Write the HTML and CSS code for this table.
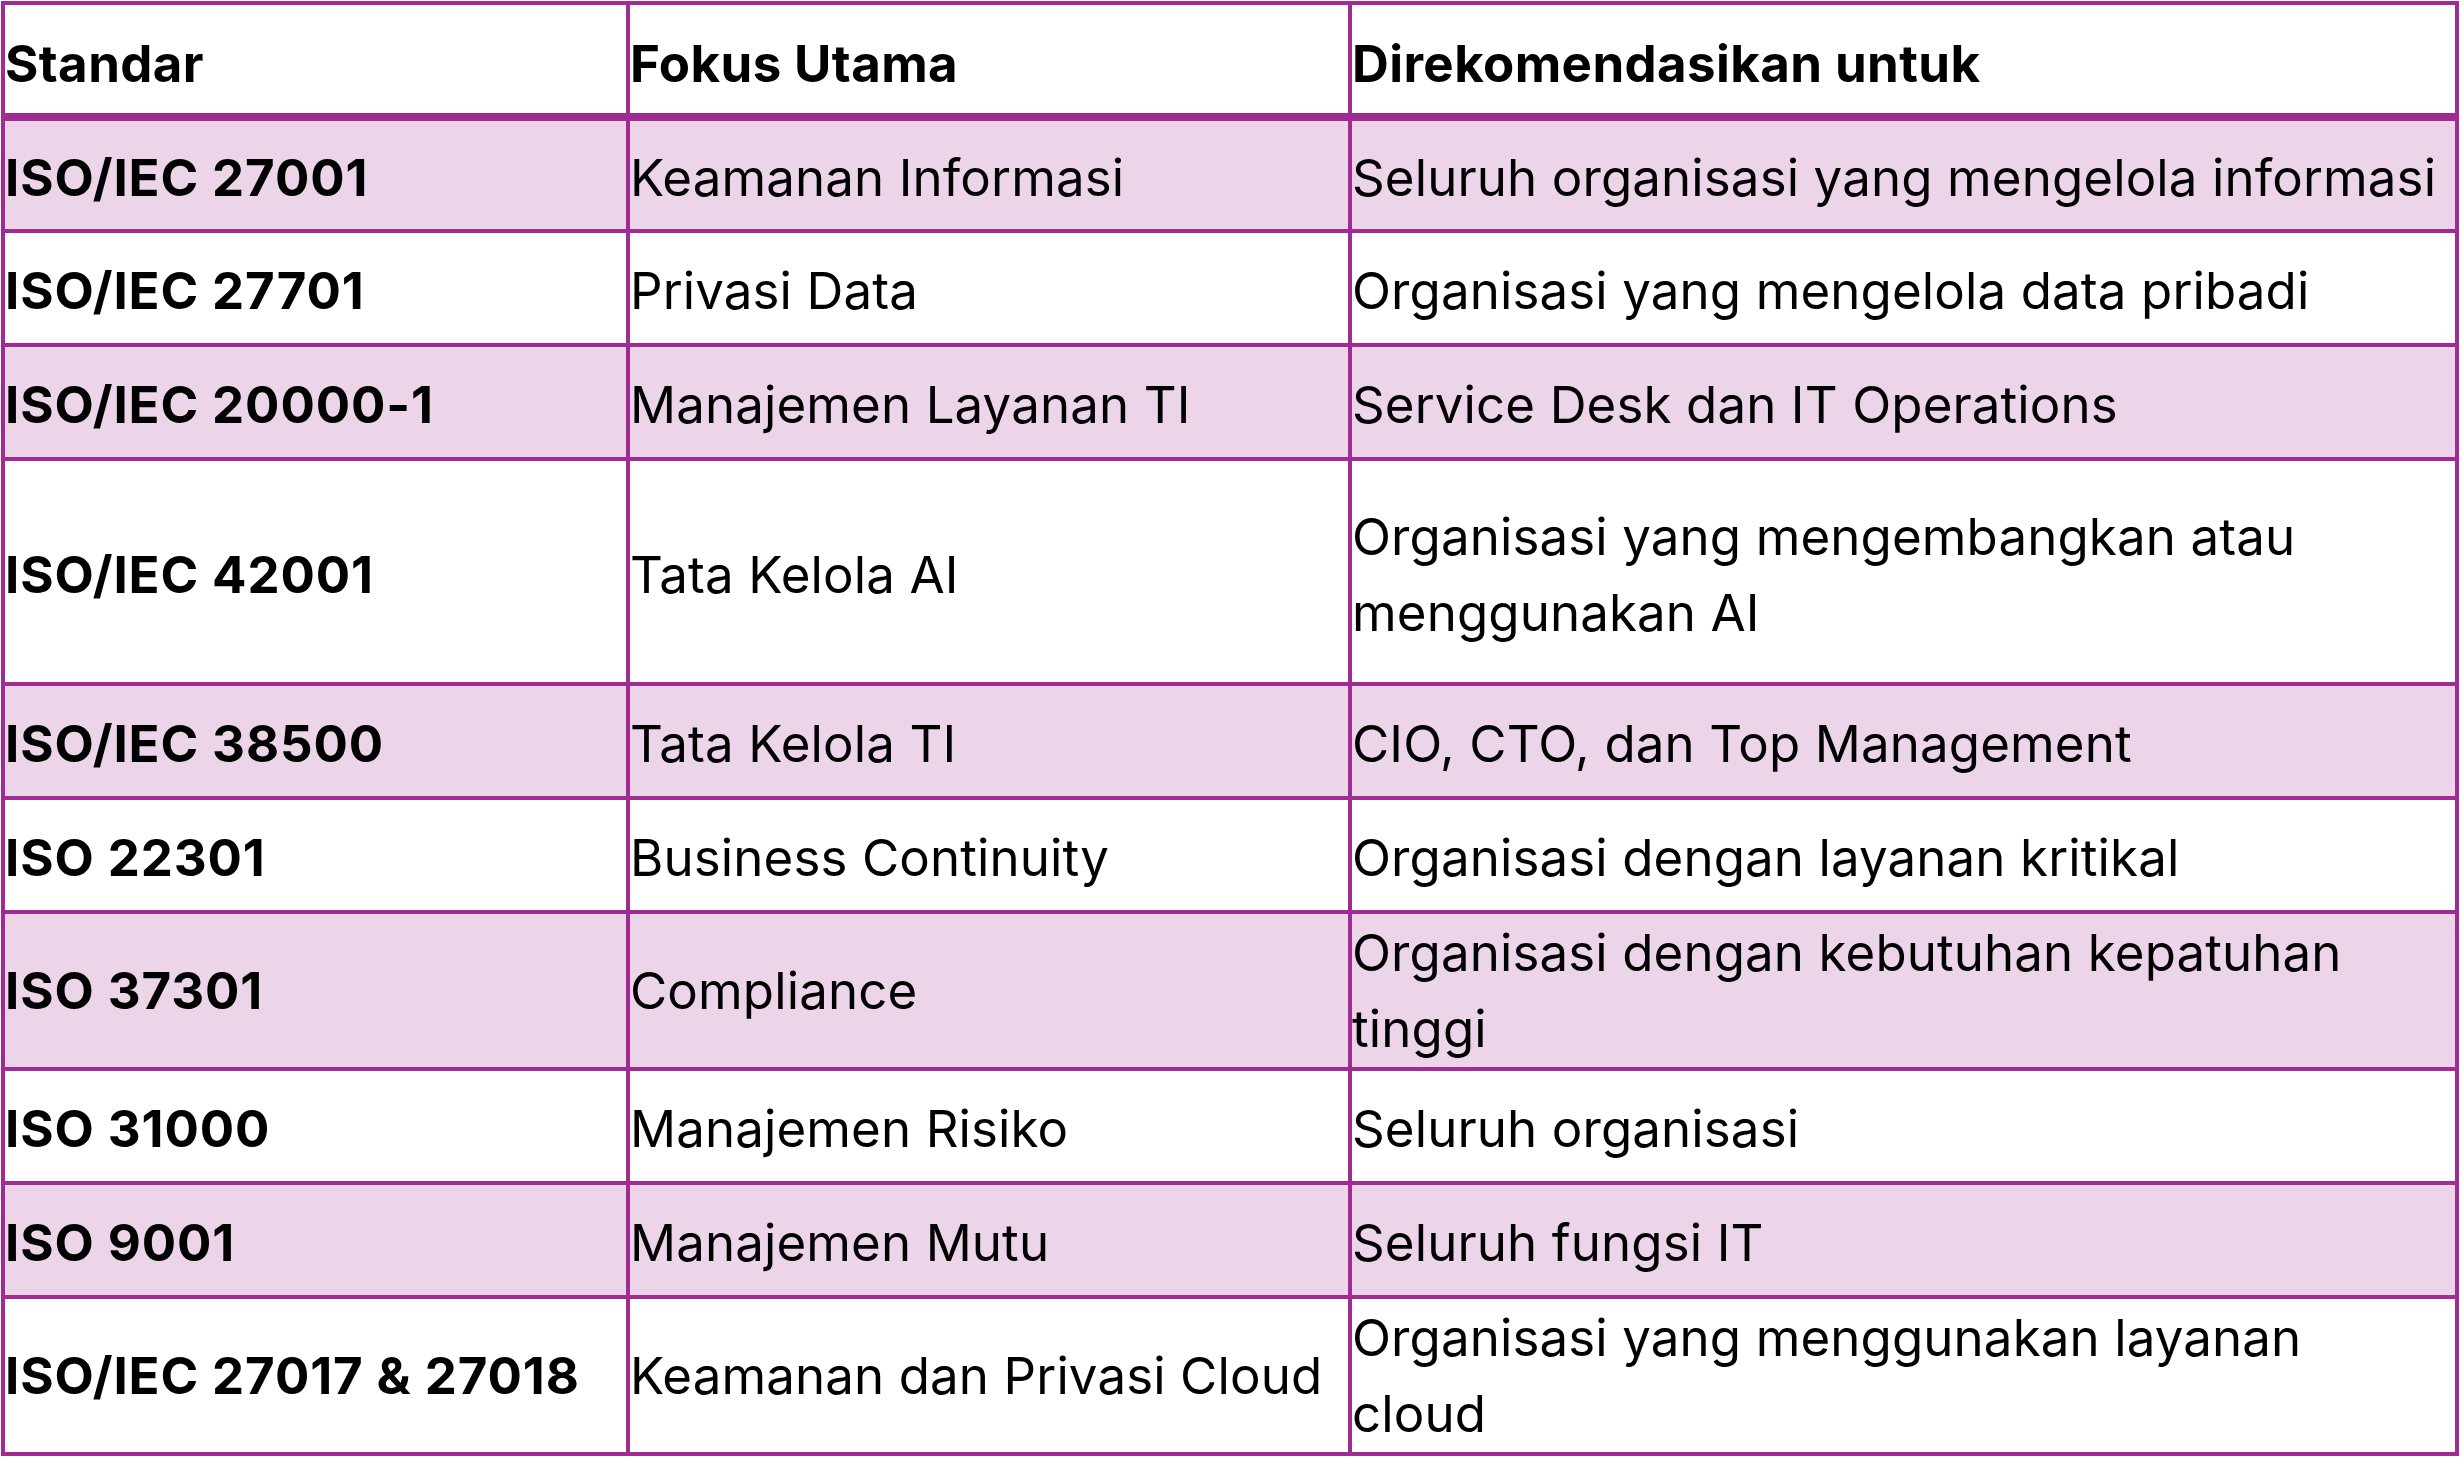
FILE: index.html
```html
<!DOCTYPE html>
<html lang="id">
<head>
<meta charset="utf-8">
<title>Standar ISO</title>
<link rel="stylesheet" href="styles.css">
</head>
<body>
<table class="std-table">
  <colgroup>
    <col class="c1"><col class="c2"><col class="c3">
  </colgroup>
  <thead>
    <tr class="head">
      <th>Standar</th>
      <th>Fokus Utama</th>
      <th>Direkomendasikan untuk</th>
    </tr>
  </thead>
  <tbody>
    <tr class="row first shaded">
      <td class="name">ISO/IEC 27001</td>
      <td>Keamanan Informasi</td>
      <td>Seluruh organisasi yang mengelola informasi</td>
    </tr>
    <tr class="row">
      <td class="name">ISO/IEC 27701</td>
      <td>Privasi Data</td>
      <td>Organisasi yang mengelola data pribadi</td>
    </tr>
    <tr class="row shaded">
      <td class="name">ISO/IEC 20000-1</td>
      <td>Manajemen Layanan TI</td>
      <td>Service Desk dan IT Operations</td>
    </tr>
    <tr class="row tall">
      <td class="name">ISO/IEC 42001</td>
      <td>Tata Kelola AI</td>
      <td>Organisasi yang mengembangkan atau<br>menggunakan AI</td>
    </tr>
    <tr class="row shaded">
      <td class="name">ISO/IEC 38500</td>
      <td>Tata Kelola TI</td>
      <td>CIO, CTO, dan Top Management</td>
    </tr>
    <tr class="row">
      <td class="name">ISO 22301</td>
      <td>Business Continuity</td>
      <td>Organisasi dengan layanan kritikal</td>
    </tr>
    <tr class="row double shaded">
      <td class="name">ISO 37301</td>
      <td>Compliance</td>
      <td>Organisasi dengan kebutuhan kepatuhan<br>tinggi</td>
    </tr>
    <tr class="row">
      <td class="name">ISO 31000</td>
      <td>Manajemen Risiko</td>
      <td>Seluruh organisasi</td>
    </tr>
    <tr class="row shaded">
      <td class="name">ISO 9001</td>
      <td>Manajemen Mutu</td>
      <td>Seluruh fungsi IT</td>
    </tr>
    <tr class="row double last">
      <td class="name">ISO/IEC 27017 &amp; 27018</td>
      <td>Keamanan dan Privasi Cloud</td>
      <td>Organisasi yang menggunakan layanan<br>cloud</td>
    </tr>
  </tbody>
</table>
</body>
</html>
```
FILE: styles.css
```css
html, body {
  margin: 0;
  padding: 0;
  background: #ffffff;
}

body {
  padding: 1px 0 0 1px;
  font-family: "Inter", "Liberation Sans", sans-serif;
  font-size: 51px;
  line-height: 76px;
  color: #000000;
}

.std-table {
  border-collapse: separate;
  border-spacing: 0;
  table-layout: fixed;
  width: 2458px;
  border-top: 4px solid #a02b93;
  border-left: 4px solid #a02b93;
}

.c1 { width: 625px; }
.c2 { width: 722px; }
.c3 { width: 1107px; }

.std-table th,
.std-table td {
  box-sizing: border-box;
  border-right: 4px solid #a02b93;
  border-bottom: 4px solid #a02b93;
  padding: 5px 4px 0 0;
  text-align: left;
  vertical-align: middle;
  white-space: nowrap;
  overflow: visible;
}

.std-table th {
  font-weight: 700;
  letter-spacing: 0.4px;
  height: 116px;
  padding-top: 10px;
  border-bottom-width: 8px;
  background: #ffffff;
}

.std-table td {
  font-weight: 400;
  letter-spacing: 0.12px;
  height: 114px;
}

.std-table td.name {
  font-weight: 700;
  letter-spacing: 0.9px;
}

.row.first td { height: 112px; }
.row.tall td { height: 225px; padding-top: 6px; }
.row.double td { height: 157px; padding-top: 1px; }
.row.double.last td { height: 156px; }

.shaded td {
  background: #ecd5e9;
}
```
